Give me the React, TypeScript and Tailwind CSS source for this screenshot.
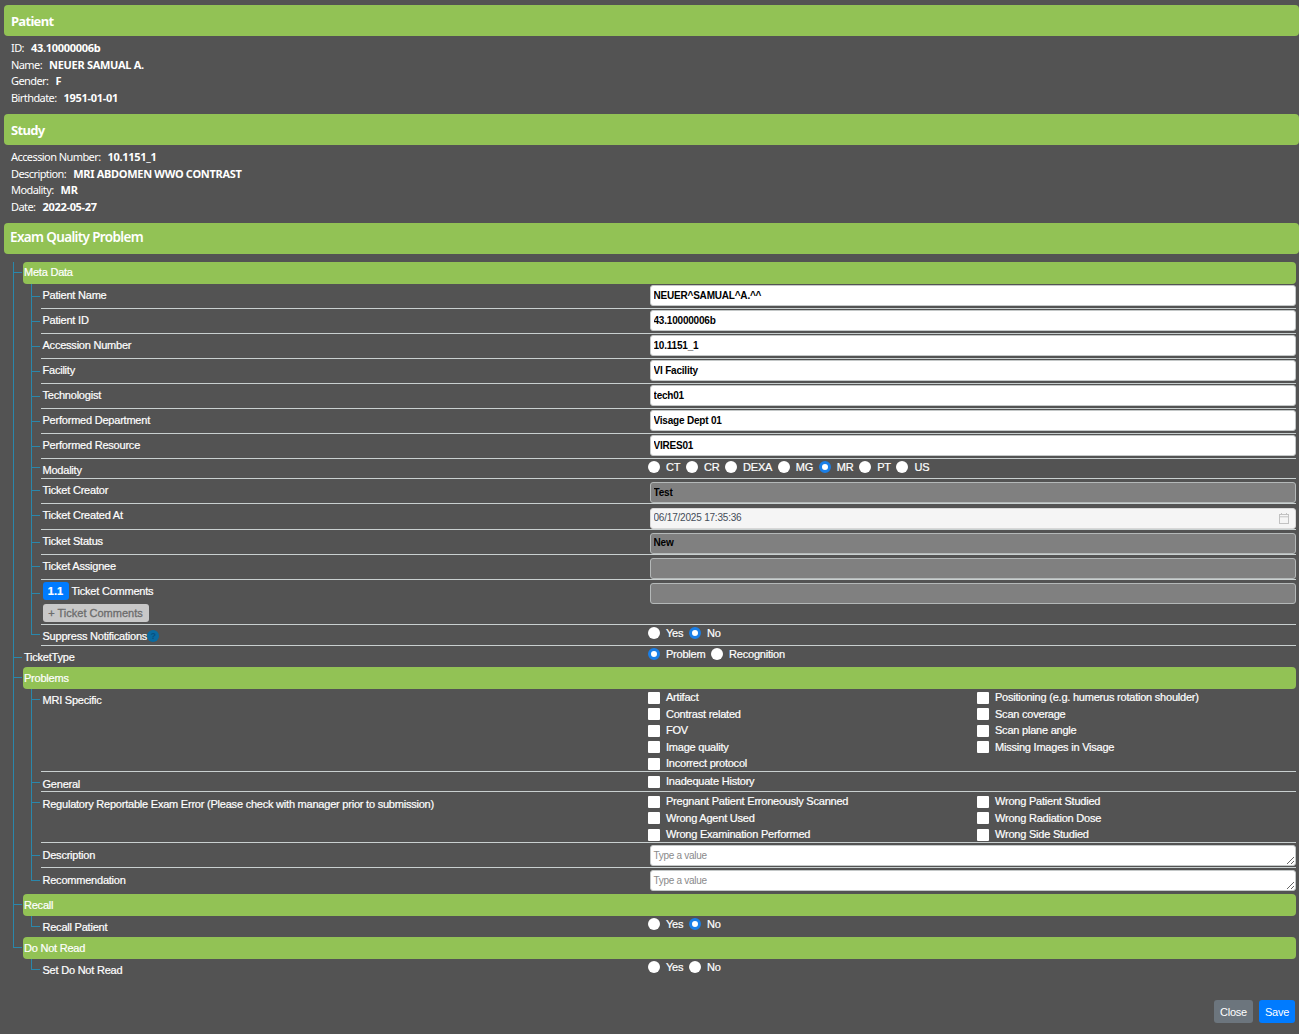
import React from "react";

const sans = "font-['Liberation_Sans',Arial,sans-serif]";

function Head({ children, cls = "" }: { children: React.ReactNode; cls?: string }) {
  return (
    <div className={`h-[31px] bg-[#92c255] rounded-[4px] flex items-center text-white font-['Noto_Sans',sans-serif] ${cls}`}>
      {children}
    </div>
  );
}

function Info({ rows }: { rows: [string, string][] }) {
  return (
    <div className="pt-[4px] pb-[8px] pl-[7px] font-['Noto_Sans',sans-serif] text-[11px] leading-[16.5px] text-white [-webkit-text-stroke:0px]">
      {rows.map(([k, v]) => (
        <div key={k} className="flex gap-[7px]">
          <span className="font-normal tracking-[-0.58px]">{k}</span>
          <span className="font-bold tracking-[-0.3px]">{v}</span>
        </div>
      ))}
    </div>
  );
}

function Tree({ last, y = 12, children }: { last?: boolean; y?: number; children: React.ReactNode }) {
  return (
    <div className="relative">
      {!last && <span className="absolute left-[-10px] top-0 bottom-0 border-l border-[#2a87ab]" />}
      <span className="absolute left-[-10px] top-0 w-[9px] border-l border-b border-[#2a87ab]" style={{ height: y }} />
      {children}
    </div>
  );
}

function Row({ label, h, sep = true, labelCls = "pt-[4px]", children, last, y }: { label: React.ReactNode; h: number; sep?: boolean; labelCls?: string; children?: React.ReactNode; last?: boolean; y?: number }) {
  return (
    <Tree last={last} y={y ?? Math.round(h / 2)}>
      <div className={`flex ${sep ? "border-b border-[#c9d0d0]" : ""}`} style={{ height: h }}>
        <div className={`shrink-0 w-[607px] pl-[1.5px] ${labelCls}`}>{label}</div>
        <div className="flex-1 min-w-0">{children}</div>
      </div>
    </Tree>
  );
}

function Field({ value, mode = "white", top = 1, raise = false }: { value: string; mode?: "white" | "gray" | "date"; top?: number; raise?: boolean }) {
  const color = mode === "gray" ? "bg-[#808080] border-[#b4b8b8]" : mode === "date" ? "bg-[#f5f5f5] border-[#d8d8d8]" : "bg-white border-[#c4c8c8]";
  return (
    <div className="ml-[2px] relative" style={{ marginTop: top }}>
      <input
        readOnly
        value={value}
        className={`block w-full h-[21px] border rounded-[3px] px-[2.5px] outline-none text-[10px] font-bold tracking-[-0.2px] [-webkit-text-stroke:0px] ${sans} ${color} ${raise ? "pb-[2px]" : ""} ${mode === "date" ? "text-[#444c58] font-normal" : "text-black"}`}
      />
      {mode === "date" && (
        <svg className="absolute right-[7px] top-[5px]" width="10" height="11" viewBox="0 0 10 11" fill="none" stroke="#c2c2c2" strokeWidth="1">
          <rect x="0.5" y="1.5" width="9" height="9" />
          <path d="M0.5 3.8h9M2.5 0v2M7.5 0v2" />
        </svg>
      )}
    </div>
  );
}

function Area({ top = 2 }: { top?: number }) {
  return (
    <div className="ml-[2px]" style={{ marginTop: top }}>
      <textarea
        readOnly
        placeholder="Type a value"
        className={`block w-full h-[21px] min-h-[21px] border border-[#c4c8c8] rounded-[3px] bg-white px-[2.5px] py-[3.5px] outline-none text-[10px] leading-[12px] tracking-[-0.28px] [-webkit-text-stroke:0px] placeholder:text-[#8a8a8a] overflow-hidden ${sans}`}
      />
    </div>
  );
}

function Radio({ label, checked }: { label: string; checked?: boolean }) {
  return (
    <label className="flex items-center h-[16.5px]">
      <input
        type="radio"
        readOnly
        checked={!!checked}
        className="appearance-none w-[12px] h-[12px] rounded-full bg-white checked:border-[3px] checked:border-[#1a7fe8] shrink-0"
      />
      <span className="ml-[6px] mr-[5.7px]">{label}</span>
    </label>
  );
}

function Check({ label }: { label: string }) {
  return (
    <label className="flex items-center h-[16.5px]">
      <input type="checkbox" readOnly className="appearance-none w-[12px] h-[12px] mt-[1px] bg-white rounded-[1px] shrink-0" />
      <span className="ml-[6px]">{label}</span>
    </label>
  );
}

function Bar({ children, cls = "" }: { children: React.ReactNode; cls?: string }) {
  return <div className={`h-[22px] bg-[#92c255] rounded-[4px] flex items-center pl-[1px] ${cls}`}>{children}</div>;
}

function Checks({ a, b, pt = 1 }: { a: string[]; b: string[]; pt?: number }) {
  return (
    <div className="flex" style={{ paddingTop: pt }}>
      <div className="w-[329px]">{a.map((t) => <Check key={t} label={t} />)}</div>
      <div>{b.map((t) => <Check key={t} label={t} />)}</div>
    </div>
  );
}

export default function App() {
  return (
    <div className={`h-[1034px] overflow-hidden bg-[#535353] pl-[4px] pt-[5px] text-white ${sans} text-[11px] leading-[14px] tracking-[-0.22px] [-webkit-text-stroke:0.2px_#fff]`}>
      <Head cls="pl-[7px] text-[13px] font-bold tracking-[-0.7px] [-webkit-text-stroke:0px]">Patient</Head>
      <Info rows={[["ID:", "43.10000006b"], ["Name:", "NEUER SAMUAL A."], ["Gender:", "F"], ["Birthdate:", "1951-01-01"]]} />
      <Head cls="pl-[7px] text-[13px] font-bold tracking-[-0.7px] [-webkit-text-stroke:0px]">Study</Head>
      <Info rows={[["Accession Number:", "10.1151_1"], ["Description:", "MRI ABDOMEN WWO CONTRAST"], ["Modality:", "MR"], ["Date:", "2022-05-27"]]} />
      <Head cls="pl-[6px] pb-[3px] text-[13.5px] font-semibold tracking-[-0.65px] [-webkit-text-stroke:0px]">Exam Quality Problem</Head>

      <div className="pl-[19px] pt-[8px] w-[1292px]">
        <Tree y={11}>
          <Bar cls="pb-[2px]">Meta Data</Bar>
          <div className="pl-[18px]">
            <Row label="Patient Name" h={25}><Field value="NEUER^SAMUAL^A.^^" /></Row>
            <Row label="Patient ID" h={25}><Field value="43.10000006b" /></Row>
            <Row label="Accession Number" h={25}><Field value="10.1151_1" /></Row>
            <Row label="Facility" h={25}><Field value="VI Facility" /></Row>
            <Row label="Technologist" h={25}><Field value="tech01" /></Row>
            <Row label="Performed Department" h={25}><Field value="Visage Dept 01" /></Row>
            <Row label="Performed Resource" h={25}><Field value="VIRES01" /></Row>
            <Row label="Modality" h={20} y={9}>
              <div className="flex">
                {["CT", "CR", "DEXA", "MG", "MR", "PT", "US"].map((m) => <Radio key={m} label={m} checked={m === "MR"} />)}
              </div>
            </Row>
            <Row label="Ticket Creator" h={25} y={12}><Field value="Test" mode="gray" top={3} /></Row>
            <Row label="Ticket Created At" h={26} y={12}><Field value="06/17/2025 17:35:36" mode="date" top={4} raise /></Row>
            <Row label="Ticket Status" h={25} y={13}><Field value="New" mode="gray" top={3} raise /></Row>
            <Row label="Ticket Assignee" h={25} y={12}><Field value="" mode="gray" top={3} /></Row>
            <Row
              h={45}
              y={14}
              labelCls="pt-[2px]"
              label={
                <div>
                  <div className="flex items-center gap-[3px]">
                    <span className="w-[26px] h-[18px] rounded-[3px] bg-[#007bff] font-bold tracking-normal flex items-center justify-center">1.1</span>
                    <span>Ticket Comments</span>
                  </div>
                  <button className="mt-[4px] w-[106px] h-[18px] rounded-[3px] bg-[#c8c8c8] text-[#6c6c6c] text-[11px] tracking-normal [-webkit-text-stroke:0.3px_#6c6c6c]">+ Ticket Comments</button>
                </div>
              }
            >
              <Field value="" mode="gray" top={3} />
            </Row>
            <Row
              last
              h={21}
              y={10}
              label={
                <div className="flex items-center">
                  <span>Suppress Notifications</span>
                  <span className="w-[12px] h-[12px] rounded-full bg-[#0a6aa0] text-[#075080] text-[9px] font-bold flex items-center justify-center [-webkit-text-stroke:0px]">?</span>
                </div>
              }
            >
              <div className="flex"><Radio label="Yes" /><Radio label="No" checked /></div>
            </Row>
          </div>
        </Tree>

        <Tree y={12}>
          <div className="h-[21px] flex">
            <div className="w-[625px] pl-[1px] pt-[4px]">TicketType</div>
            <div className="flex"><Radio label="Problem" checked /><Radio label="Recognition" /></div>
          </div>
        </Tree>

        <Tree y={11}>
          <Bar>Problems</Bar>
          <div className="pl-[18px]">
            <Row label="MRI Specific" h={83} y={11}>
              <Checks
                pt={0}
                a={["Artifact", "Contrast related", "FOV", "Image quality", "Incorrect protocol"]}
                b={["Positioning (e.g. humerus rotation shoulder)", "Scan coverage", "Scan plane angle", "Missing Images in Visage"]}
              />
            </Row>
            <Row label="General" h={20} labelCls="pt-[5px]" y={11}><Checks a={["Inadequate History"]} b={[]} /></Row>
            <Row label="Regulatory Reportable Exam Error (Please check with manager prior to submission)" h={51} labelCls="pt-[5px]" y={11}>
              <Checks
                a={["Pregnant Patient Erroneously Scanned", "Wrong Agent Used", "Wrong Examination Performed"]}
                b={["Wrong Patient Studied", "Wrong Radiation Dose", "Wrong Side Studied"]}
              />
            </Row>
            <Row label="Description" h={25} labelCls="pt-[5px]"><Area /></Row>
            <Row last label="Recommendation" h={26} sep={false} labelCls="pt-[5px]"><Area /></Row>
          </div>
        </Tree>

        <Tree y={11}>
          <Bar>Recall</Bar>
          <div className="pl-[18px]">
            <Row last label="Recall Patient" h={21} sep={false} y={11}>
              <div className="flex"><Radio label="Yes" /><Radio label="No" checked /></div>
            </Row>
          </div>
        </Tree>

        <Tree last y={11}>
          <Bar>Do Not Read</Bar>
          <div className="pl-[18px]">
            <Row last label="Set Do Not Read" h={21} sep={false} y={11}>
              <div className="flex"><Radio label="Yes" /><Radio label="No" /></div>
            </Row>
          </div>
        </Tree>
      </div>

      <div className="flex justify-end gap-[6px] mt-[20px] w-[1291px]">
        <button className="w-[39px] h-[23px] rounded-[3px] bg-[#6c757d] text-white text-[11px] [-webkit-text-stroke:0px]">Close</button>
        <button className="w-[36px] h-[23px] rounded-[3px] bg-[#007bff] text-white text-[11px] [-webkit-text-stroke:0px]">Save</button>
      </div>
    </div>
  );
}
